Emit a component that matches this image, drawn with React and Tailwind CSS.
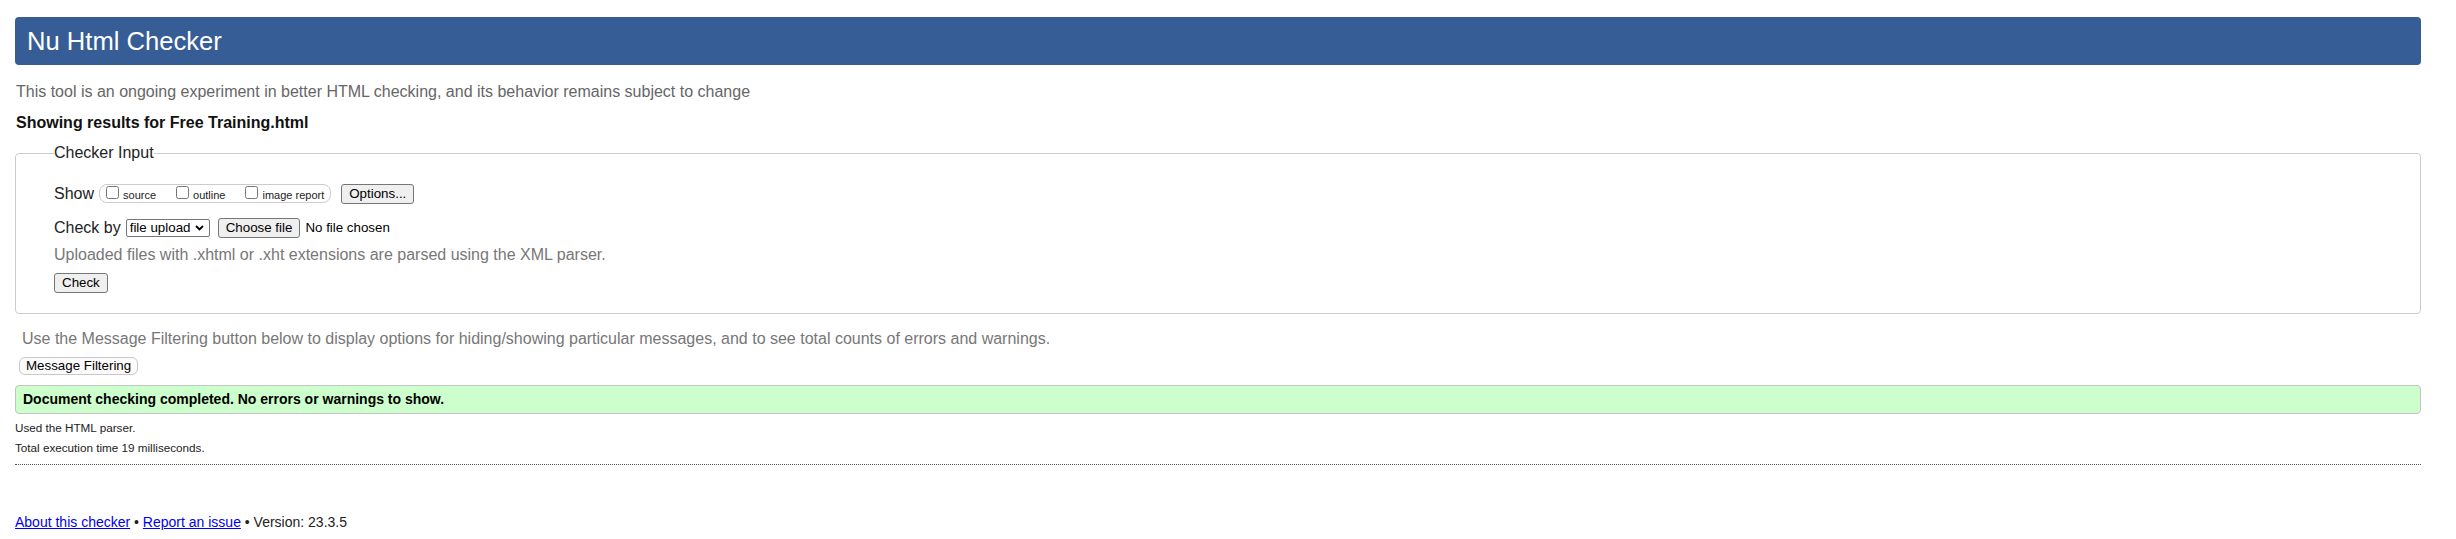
import { useState } from 'react'

const BTN =
  'flex h-[20px] items-center rounded-[3px] border border-[#767676] bg-[#efefef] px-[7px] text-[13.33px] leading-[16px] text-black'

function Option({ label, checked, onChange }) {
  return (
    <label className="flex items-start">
      <input
        type="checkbox"
        checked={checked}
        onChange={onChange}
        className="m-0 mt-[1px] h-[13px] w-[13px]"
      />
      <span className="ml-[4px] mt-[3.5px] text-[11px] leading-[12px] text-[#222]">{label}</span>
    </label>
  )
}

export default function App() {
  const [show, setShow] = useState({ source: false, outline: false, image: false })
  const toggle = (k) => () => setShow((s) => ({ ...s, [k]: !s[k] }))

  return (
    <div className="min-h-[539px] bg-white pl-[15px] pr-[35px] pt-[17px] font-['Liberation_Sans',Arial,sans-serif] text-[16px] text-[#222]">
      <h1 className="flex h-[48px] items-center rounded-[4px] bg-[#365d95] px-[12px] text-[25.6px] font-normal leading-[30px] text-white">
        Nu Html Checker
      </h1>

      <p className="mt-[18px] pl-[1px] leading-[18px] text-[#666]">
        This tool is an ongoing experiment in better HTML checking, and its behavior remains subject to change
      </p>
      <p className="mt-[13px] pl-[1px] font-bold leading-[18px] text-[#111]">
        Showing results for Free Training.html
      </p>

      <fieldset className="mt-[12px] rounded-[4px] border border-[#cccccc] pb-[20px] pl-[38px]">
        <legend className="leading-[18px] text-[#222]">Checker Input</legend>

        <div className="mt-[21.5px] flex h-[20px] items-center">
          <span className="leading-[18px]">Show</span>
          <div className="ml-[5px] flex h-[19px] items-start gap-[20px] rounded-[8px] border border-[#cccccc] px-[6px]">
            <Option label="source" checked={show.source} onChange={toggle('source')} />
            <Option label="outline" checked={show.outline} onChange={toggle('outline')} />
            <Option label="image report" checked={show.image} onChange={toggle('image')} />
          </div>
          <button type="button" className={`ml-[10px] ${BTN}`}>Options...</button>
        </div>

        <div className="mt-[14px] flex h-[20px] items-center">
          <span className="leading-[18px]">Check by</span>
          <div className="relative ml-[5px]">
            <select className="block h-[18px] w-[84px] appearance-none rounded-[2px] border border-[#767676] bg-white pl-[3px] text-[13.33px] leading-[16px] text-black">
              <option>file upload</option>
              <option>address</option>
              <option>text input</option>
            </select>
            <svg
              className="pointer-events-none absolute right-[6px] top-[6px]"
              width="9"
              height="6"
              viewBox="0 0 9 6"
            >
              <path d="M1 1 L4.5 4.5 L8 1" stroke="#000" strokeWidth="1.8" fill="none" />
            </svg>
          </div>
          <button type="button" className={`ml-[8px] ${BTN}`}>Choose file</button>
          <span className="ml-[5px] text-[13.33px] leading-[16px] text-black">No file chosen</span>
        </div>

        <p className="mt-[8px] leading-[18px] text-[#777]">
          Uploaded files with .xhtml or .xht extensions are parsed using the XML parser.
        </p>

        <div className="mt-[9px] flex">
          <button type="button" className={BTN}>Check</button>
        </div>
      </fieldset>

      <p className="mt-[16px] pl-[7px] leading-[18px] text-[#777]">
        Use the Message Filtering button below to display options for hiding/showing particular messages, and to see total counts of errors and warnings.
      </p>
      <div className="ml-[4px] mt-[9px] flex">
        <button
          type="button"
          className="flex h-[18px] items-center rounded-[6px] border border-[#c8c8c8] bg-[#fbfbfb] px-[6px] text-[13.33px] leading-[16px] text-black"
        >
          Message Filtering
        </button>
      </div>

      <div className="mt-[10px] flex h-[29px] items-center rounded-[4px] border border-[#c4c4c4] bg-[#ccffcc] pl-[7px] text-[14px] font-bold leading-[16px] text-black">
        Document checking completed. No errors or warnings to show.
      </div>

      <p className="mt-[7px] text-[11.7px] leading-[14px] text-[#222]">Used the HTML parser.</p>
      <p className="mt-[6.5px] text-[11.7px] leading-[14px] text-[#222]">Total execution time 19 milliseconds.</p>

      <hr className="mt-[9px] border-0 border-t border-dotted border-[#555]" />

      <p className="mt-[49px] text-[14px] leading-[16px] text-[#222]">
        <a href="#about" className="text-[#0000ee] underline">About this checker</a>
        {' • '}
        <a href="#issue" className="text-[#0000ee] underline">Report an issue</a>
        {' • Version: 23.3.5'}
      </p>
    </div>
  )
}
